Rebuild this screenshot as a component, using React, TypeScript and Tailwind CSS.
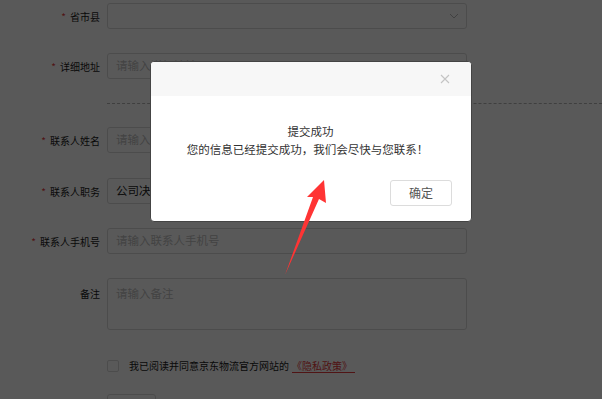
const fontCN = { fontFamily: '"Noto Sans CJK SC", "Noto Sans", sans-serif' };

const Row = ({
  label,
  required = true,
  children,
  className = "",
}: {
  label: string;
  required?: boolean;
  children: React.ReactNode;
  className?: string;
}) => (
  <div className={`flex items-center ${className}`}>
    <div className="w-[107px] shrink-0 pr-[7px] text-right text-[10px] text-[#1a1a1a]">
      {required && <span className="mr-[4px] text-[#e4393c]">*</span>}
      {label}
    </div>
    <div className="w-[360px] shrink-0">{children}</div>
  </div>
);

const Input = ({ placeholder, value }: { placeholder?: string; value?: string }) => (
  <div className="flex h-[26px] items-center rounded-[3px] border border-[#d9d9d9] bg-white px-[8px] text-[11.5px]">
    {value ? (
      <span className="text-[#222]">{value}</span>
    ) : (
      <span className="text-[#bfbfbf]">{placeholder}</span>
    )}
  </div>
);

export default function App() {
  return (
    <div className="relative h-[399px] w-[602px] overflow-hidden bg-white" style={fontCN}>
      {/* form underneath */}
      <div className="pt-[3px]">
        <Row label="省市县" className="mb-[24px] h-[26px]">
          <div className="flex h-[26px] items-center justify-end rounded-[3px] border border-[#d9d9d9] bg-white pr-[7px]">
            <svg width="10" height="6" viewBox="0 0 10 6" fill="none">
              <path d="M1 1l4 4 4-4" stroke="#bbb" strokeWidth="1" />
            </svg>
          </div>
        </Row>
        <Row label="详细地址" className="h-[26px]">
          <Input placeholder="请输入详细地址" />
        </Row>
        <div className="ml-[107px] mt-[24px] border-t border-dashed border-[#b5b5b5]" />
        <Row label="联系人姓名" className="mt-[23px] mb-[25px] h-[26px]">
          <Input placeholder="请输入联系人姓名" />
        </Row>
        <Row label="联系人职务" className="mb-[24px] h-[26px]">
          <Input value="公司决策人" />
        </Row>
        <Row label="联系人手机号" className="mb-[24px] h-[26px]">
          <Input placeholder="请输入联系人手机号" />
        </Row>
        <div className="flex">
          <div className="w-[107px] shrink-0 pr-[7px] pt-[8px] text-right text-[10px] text-[#1a1a1a]">备注</div>
          <div className="h-[52px] w-[360px] shrink-0 rounded-[3px] border border-[#d9d9d9] px-[8px] pt-[6px] text-[11.5px] text-[#bfbfbf]">
            请输入备注
          </div>
        </div>
        <div className="ml-[107px] mt-[28px] flex items-center text-[10px] text-[#1a1a1a]">
          <span className="mr-[10px] h-[12px] w-[12px] rounded-[2px] border border-[#d9d9d9] bg-white" />
          <span>我已阅读并同意京东物流官方网站的</span>
          <span className="ml-[3px] border-b border-[#e4393c] pr-[3px] leading-[13px] text-[#e4393c]">《隐私政策》</span>
        </div>
        <div className="ml-[107px] mt-[21px] h-[26px] w-[49px] rounded-[3px] border border-[#d9d9d9]" />
      </div>

      {/* mask */}
      <div className="absolute inset-0 bg-black/65" />

      {/* dialog */}
      <div className="absolute left-[150px] top-[61px] flex h-[161px] w-[322px] flex-col overflow-hidden rounded-[4px] border border-[#444] bg-white">
        <div className="flex h-[34px] items-center justify-end bg-[#f7f7f7] pr-[21px]">
          <svg width="10" height="10" viewBox="0 0 10 10">
            <path d="M1 1l8 8M9 1l-8 8" stroke="#c4c4c4" strokeWidth="1.1" />
          </svg>
        </div>
        <div className="mt-[27px] flex flex-col items-center pr-[7px] text-[11.5px] leading-[17px] text-[#333]">
          <div className="pl-[6px]">提交成功</div>
          <div className="mt-[1px]">您的信息已经提交成功，我们会尽快与您联系！</div>
        </div>
        <div className="mt-auto mb-[15px] flex justify-end pr-[19px]">
          <button className="flex h-[26px] w-[62px] items-center justify-center rounded-[3px] border border-[#dcdcdc] bg-white text-[12px] text-[#555]">
            确定
          </button>
        </div>
      </div>

      {/* red arrow */}
      <svg className="absolute left-0 top-0" width="602" height="399" viewBox="0 0 602 399">
        <polygon points="324,180 326,203 319,199 285,275 313,197 307,197" fill="#ff3434" />
      </svg>
    </div>
  );
}
